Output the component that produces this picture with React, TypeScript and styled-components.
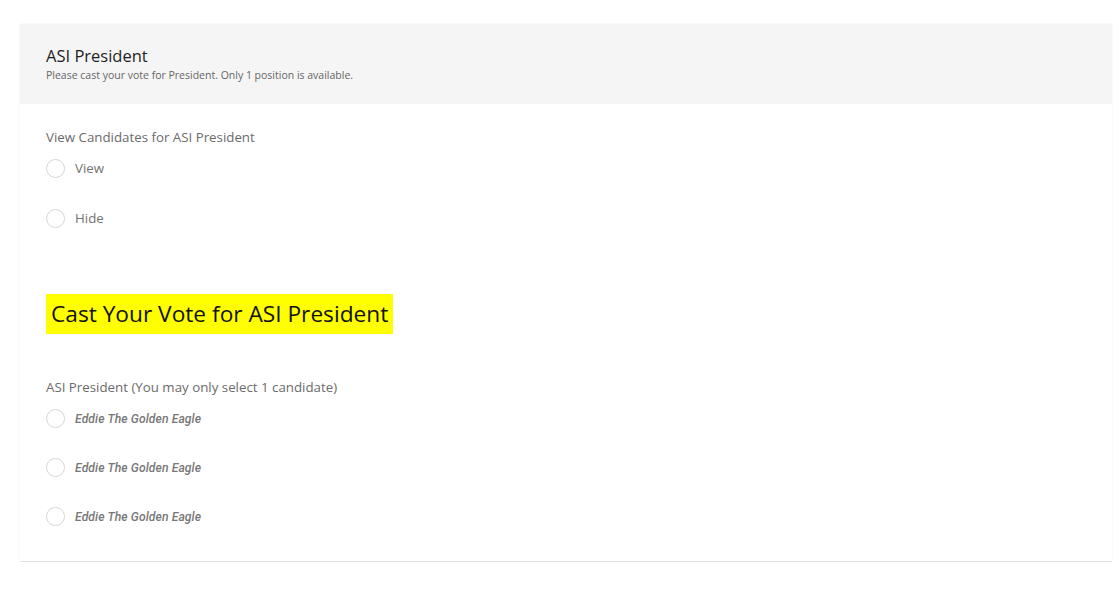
import React from "react";
import styled, { createGlobalStyle } from "styled-components";

const GlobalStyle = createGlobalStyle`
  html, body {
    margin: 0;
    padding: 0;
    background: #ffffff;
    font-family: "Open Sans", "Liberation Sans", sans-serif;
  }
`;

const Page = styled.div`
  padding: 24px 7px 0 20px;
`;

const Card = styled.section`
  background: #fff;
  border-bottom: 1px solid #e2e2e2;
  box-shadow: 0 0 1px rgba(0, 0, 0, 0.12);
`;

const Header = styled.header`
  background: #f5f5f5;
  padding: 20px 26px 21px;
  height: 39px;
`;

const Title = styled.h2`
  margin: 0;
  font-size: 16.5px;
  font-weight: 400;
  line-height: 24px;
  color: #1f1f1f;
`;

const Subtitle = styled.p`
  margin: 0;
  font-size: 10.5px;
  line-height: 14px;
  color: #666;
`;

const Body = styled.div`
  padding: 24px 26px 35px;
`;

const Question = styled.fieldset`
  border: 0;
  margin: 0;
  padding: 0;
`;

const Legend = styled.legend`
  padding: 0;
  font-size: 13.3px;
  line-height: 18px;
  color: #6b6b6b;
  margin-bottom: 12px;
`;

const OptionList = styled.div<{ $gap: number }>`
  display: flex;
  flex-direction: column;
  gap: ${({ $gap }) => $gap}px;
`;

const Option = styled.label`
  display: flex;
  align-items: center;
  gap: 10px;
  height: 20px;
  cursor: pointer;
`;

const Radio = styled.span`
  width: 17px;
  height: 17px;
  border-radius: 50%;
  border: 1px solid #d6d6d6;
  background: #fff;
  flex: none;
`;

const OptionText = styled.span`
  font-size: 13.3px;
  color: #737373;
`;

const CandidateName = styled.span`
  display: inline-block;
  font-family: Roboto, "Liberation Sans", sans-serif;
  font-size: 13.5px;
  font-style: italic;
  font-weight: 500;
  letter-spacing: 0.1px;
  color: #777;
  transform: scaleX(0.9);
  transform-origin: left center;
`;

const VoteHeading = styled.h3`
  display: inline-block;
  margin: 66px 0 44px;
  padding: 0 5px;
  background: #ffff00;
  font-size: 22.7px;
  font-weight: 400;
  line-height: 40px;
  color: #111;
`;

const candidates = ["Eddie The Golden Eagle", "Eddie The Golden Eagle", "Eddie The Golden Eagle"];

export default function App() {
  return (
    <>
      <GlobalStyle />
      <Page>
        <Card>
          <Header>
            <Title>ASI President</Title>
            <Subtitle>Please cast your vote for President. Only 1 position is available.</Subtitle>
          </Header>
          <Body>
            <Question>
              <Legend>View Candidates for ASI President</Legend>
              <OptionList $gap={30}>
                <Option>
                  <Radio />
                  <OptionText>View</OptionText>
                </Option>
                <Option>
                  <Radio />
                  <OptionText>Hide</OptionText>
                </Option>
              </OptionList>
            </Question>
            <VoteHeading>Cast Your Vote for ASI President</VoteHeading>
            <Question>
              <Legend>ASI President (You may only select 1 candidate)</Legend>
              <OptionList $gap={29}>
                {candidates.map((name, i) => (
                  <Option key={i}>
                    <Radio />
                    <CandidateName>{name}</CandidateName>
                  </Option>
                ))}
              </OptionList>
            </Question>
          </Body>
        </Card>
      </Page>
    </>
  );
}
